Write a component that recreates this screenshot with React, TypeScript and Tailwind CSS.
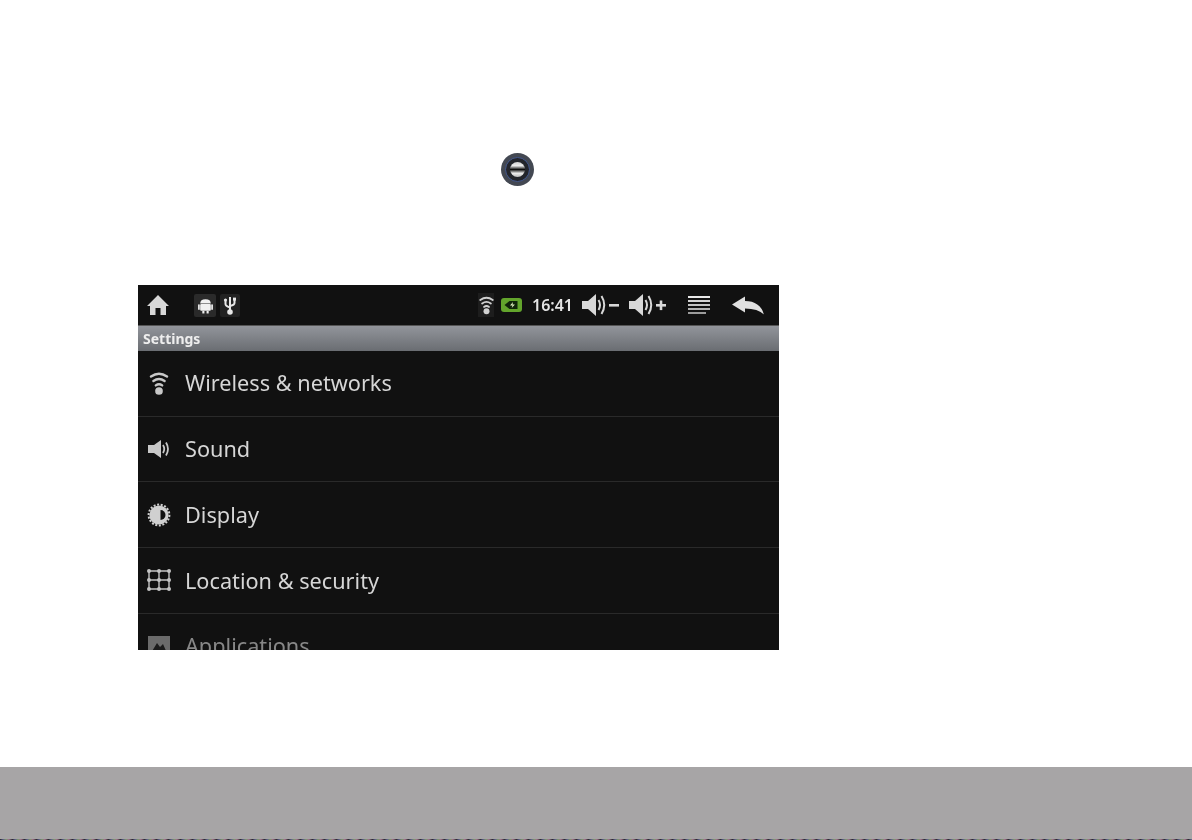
const WifiIcon = ({ className }: { className: string }) => (
  <svg viewBox="0 0 24 30" className={className} fill="none" stroke="currentColor" strokeLinecap="round">
    <path d="M2 7 Q12 0 22 7" strokeWidth="3" />
    <path d="M5 12.5 Q12 7.5 19 12.5" strokeWidth="3" />
    <path d="M8 18 Q12 15 16 18" strokeWidth="3" />
    <circle cx="12" cy="25" r="4.8" fill="currentColor" stroke="none" />
  </svg>
);

const SpeakerIcon = ({ sign }: { sign: "-" | "+" }) => (
  <svg viewBox="0 0 38 24" className="h-[24px] w-[38px] text-[#d8d8d8]" fill="currentColor">
    <path d="M0 8 H6 L14 1 V23 L6 16 H0 Z" />
    <path d="M16.5 7 Q19.5 12 16.5 17" fill="none" stroke="currentColor" strokeWidth="2" />
    <path d="M19.5 3 Q25 12 19.5 21" fill="none" stroke="currentColor" strokeWidth="2" />
    <rect x="27" y="11" width="10" height="2.6" />
    {sign === "+" && <rect x="30.7" y="7.5" width="2.6" height="9.6" />}
  </svg>
);

const rowClass = "flex h-[65.7px] shrink-0 items-center border-b border-[#2a2a2a] pl-[9px]";
const labelClass = "ml-[14px] text-[21.7px] leading-none text-[#d6d6d6]";

export default function App() {
  return (
    <div className="relative h-[840px] w-[1192px] overflow-hidden bg-white [font-family:'Noto_Sans','Open_Sans',sans-serif]">
      {/* Camera icon from the manual text */}
      <div className="flex justify-start pl-[501px] pt-[153px]">
        <div className="flex h-[33px] w-[33px] items-center justify-center rounded-full bg-[#434852] blur-[0.5px]">
          <div className="flex h-[25px] w-[25px] items-center justify-center rounded-full border border-[#44598f] bg-[#23252b]">
            <div className="h-[15px] w-[15px] rounded-full bg-[linear-gradient(#cfcfcf_0%,#eeeeee_25%,#555_42%,#0c0c0c_50%,#555_58%,#eeeeee_75%,#bbbbbb_100%)]" />
          </div>
        </div>
      </div>

      {/* Device screen */}
      <div className="ml-[138px] mt-[99px] flex h-[365px] w-[641px] flex-col overflow-hidden bg-[#111111] blur-[0.5px]">
        <div className="flex h-[40px] shrink-0 items-center text-[#d8d8d8]">
          <svg viewBox="0 0 22 22" className="ml-[9px] h-[22px] w-[22px]" fill="currentColor">
            <path d="M11 1 L22 12 H19 V21 H13.5 V14 H8.5 V21 H3 V12 H0 Z" />
          </svg>
          <div className="ml-[25px] flex h-[23px] w-[22px] items-center justify-center rounded-[2px] bg-[#2a2a2a]">
            <svg viewBox="0 0 16 16" className="h-[17px] w-[17px] text-[#f0f0f0]" fill="currentColor">
              <path d="M3 6 Q3 2 8 2 Q13 2 13 6 Z" />
              <rect x="3" y="6.6" width="10" height="6.4" rx="1" />
              <rect x="1" y="7" width="1.6" height="5" />
              <rect x="13.4" y="7" width="1.6" height="5" />
              <rect x="5" y="13" width="2" height="2.5" />
              <rect x="9" y="13" width="2" height="2.5" />
            </svg>
          </div>
          <div className="ml-[4px] flex h-[23px] w-[20px] items-center justify-center rounded-[2px] bg-[#222222]">
            <svg viewBox="0 0 14 20" className="h-[20px] w-[14px]" fill="none" stroke="#e8e8e8" strokeWidth="2">
              <path d="M7 2 V18 M2.5 6 V9 Q2.5 11 7 12.5 M11.5 5 V8 Q11.5 10 7 11" />
              <circle cx="7" cy="17" r="1.8" fill="#e8e8e8" />
              <rect x="10" y="2.6" width="3" height="3" fill="#e8e8e8" stroke="none" />
              <circle cx="2.5" cy="5" r="1.6" fill="#e8e8e8" stroke="none" />
            </svg>
          </div>

          <div className="ml-[238px] flex h-[24px] w-[16px] items-center justify-center bg-[#1d1d1d]">
            <WifiIcon className="h-[20px] w-[15px] text-[#d0d0d0]" />
          </div>
          <div className="ml-[7px] flex h-[14px] w-[21px] items-center justify-center rounded-[3px] bg-[#63a52c]">
            <svg viewBox="0 0 14 10" className="h-[10px] w-[15px]" fill="#10240a">
              <path d="M0 5 L5 1 H13 V9 H5 Z" />
              <path d="M8.5 2 L5.5 5.4 H8 L7.2 8 L10.4 4.6 H8 Z" fill="#e0f0c0" />
            </svg>
          </div>
          <span className="ml-[10px] text-[16px] font-semibold leading-none text-[#e4e4e4]">16:41</span>
          <div className="ml-[9px] flex">
            <SpeakerIcon sign="-" />
          </div>
          <div className="ml-[9px] flex">
            <SpeakerIcon sign="+" />
          </div>
          <div className="ml-[21px] flex w-[22px] flex-col gap-[1.5px]">
            <div className="h-[2.5px] w-full bg-[#e8e8e8]" />
            <div className="h-[2.5px] w-full bg-[#d4d4d4]" />
            <div className="h-[2.5px] w-full bg-[#c4c4c4]" />
            <div className="h-[2.5px] w-full bg-[#b4b4b4]" />
            <div className="h-[2.5px] w-[18px] bg-[#9c9c9c]" />
          </div>
          <svg viewBox="0 0 32 18" className="ml-[22px] h-[19px] w-[32px] text-[#e0e0e0]" fill="currentColor">
            <path d="M0 8 L13 0 V4.5 Q28 4.5 32 18 Q26 12 13 12 V16 Z" />
          </svg>
        </div>

        <div className="flex h-[26px] shrink-0 items-center border-t border-[#555555] bg-[linear-gradient(#92959b,#6a6d72)] pl-[5px] text-[14px] font-bold leading-none text-[#eeeeee]">
          Settings
        </div>

        <div className={rowClass}>
          <WifiIcon className="h-[24px] w-[24px] text-[#c8c8c8]" />
          <span className={labelClass}>Wireless &amp; networks</span>
        </div>
        <div className={rowClass}>
          <svg viewBox="0 0 24 20" className="h-[20px] w-[24px] text-[#c8c8c8]" fill="currentColor">
            <path d="M1 6 H7 L14 1 V19 L7 14 H1 Z" />
            <path d="M16 6 Q18.5 10 16 14" fill="none" stroke="currentColor" strokeWidth="1.8" />
            <path d="M19 3.5 Q23 10 19 16.5" fill="none" stroke="currentColor" strokeWidth="1.8" />
          </svg>
          <span className={labelClass}>Sound</span>
        </div>
        <div className={rowClass}>
          <svg viewBox="0 0 24 24" className="h-[24px] w-[24px] text-[#d0d0d0]" fill="currentColor">
            <circle cx="12" cy="12" r="9.6" />
            <circle cx="12" cy="12" r="10.4" fill="none" stroke="currentColor" strokeWidth="2" strokeDasharray="2 1.6" />
            <path d="M13.5 7 A5 5 0 0 1 13.5 17 Z" fill="#111111" />
          </svg>
          <span className={labelClass}>Display</span>
        </div>
        <div className={rowClass}>
          <svg viewBox="0 0 24 24" className="h-[24px] w-[24px] text-[#c4c4c4]" fill="currentColor" stroke="currentColor">
            <path d="M2 3 H22 M2 12 H22 M2 21 H22 M2 3 V21 M12 3 V21 M22 3 V21" fill="none" strokeWidth="1.4" />
            <circle cx="2" cy="3" r="2" stroke="none" />
            <circle cx="12" cy="3" r="2" stroke="none" />
            <circle cx="22" cy="3" r="2" stroke="none" />
            <circle cx="2" cy="12" r="2" stroke="none" />
            <circle cx="12" cy="12" r="2" stroke="none" />
            <circle cx="22" cy="12" r="2" stroke="none" />
            <circle cx="2" cy="21" r="2" stroke="none" />
            <circle cx="12" cy="21" r="2" stroke="none" />
            <circle cx="22" cy="21" r="2" stroke="none" />
          </svg>
          <span className={labelClass}>Location &amp; security</span>
        </div>
        <div className="flex h-[65px] shrink-0 items-center pl-[9px] opacity-60">
          <svg viewBox="0 0 24 24" className="h-[24px] w-[24px]">
            <rect x="1" y="2" width="22" height="20" fill="#a8a8a8" />
            <path d="M4 19 L10 9 L13 13 L16 10 L20 19 Z" fill="#222222" />
          </svg>
          <span className={labelClass}>Applications</span>
        </div>
      </div>

      {/* Grey footer band */}
      <div className="mt-[117px] h-[72px] bg-[#a7a5a6]" />
      <div className="h-[1px] bg-[repeating-linear-gradient(90deg,#222_0px,#5a5a8a_3px,#7a9a6a_6px,#a06a8a_9px,#333_12px)]" />
    </div>
  );
}
